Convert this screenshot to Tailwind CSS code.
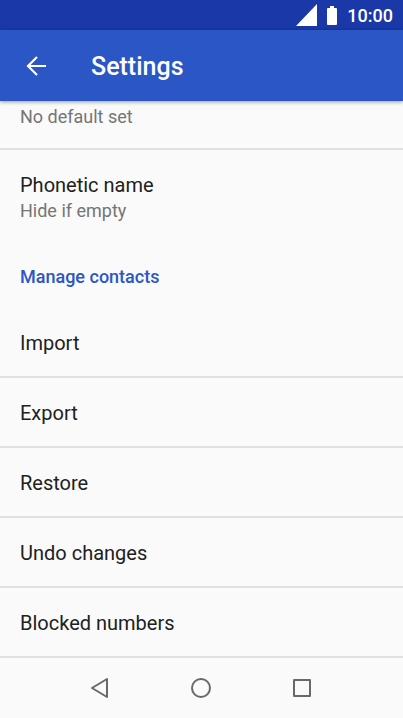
<!DOCTYPE html>
<html lang="en">
<head>
<meta charset="utf-8">
<meta name="viewport" content="width=device-width, initial-scale=1">
<title>Settings</title>
<script src="https://cdn.jsdelivr.net/npm/@tailwindcss/browser@4"></script>
</head>
<body class="flex min-h-screen flex-col bg-[#fafafa] font-[Roboto,sans-serif] text-[#212121]">
  <div class="flex h-[30px] items-center justify-end bg-[#1a38a8] pr-[10px] text-white">
    <svg class="mr-[10px] h-[22px] w-[21px]" viewBox="0 0 21 22" fill="currentColor" aria-hidden="true"><path d="M0 22 21 0V22Z"/></svg>
    <svg class="mr-[10px] h-[19px] w-[10px]" viewBox="0 0 10 19" fill="currentColor" aria-hidden="true"><path d="M3 0H7V2H9Q10 2 10 3V18Q10 19 9 19H1Q0 19 0 18V3Q0 2 1 2H3Z"/></svg>
    <time class="pt-px text-lg leading-7 font-medium">10:00</time>
  </div>
  <header class="z-10 flex h-[71px] items-center bg-[#2a56c6] px-5 text-white shadow-[0_1px_4px_rgba(0,0,0,0.4)]">
    <button type="button" aria-label="Back" class="mr-10 flex h-[30px] w-[31px] items-center justify-center">
      <svg class="h-5 w-5" viewBox="0 0 20 20" fill="none" stroke="currentColor" stroke-width="2.2" aria-hidden="true"><path d="M20 10H2M11 1 2 10 11 19"/></svg>
    </button>
    <h1 class="pt-0.5 text-[25px] leading-[30px] font-medium">Settings</h1>
  </header>
  <main class="flex-1">
    <button type="button" class="block w-full border-b-2 border-[#e0e0e0] px-5 pt-1 pb-[19px] text-left text-lg leading-6 text-[#757575]">No default set</button>
    <button type="button" class="block w-full px-5 pt-[21px] pb-[19px] text-left">
      <span class="block text-xl leading-7">Phonetic name</span>
      <span class="block text-lg leading-6 text-[#757575]">Hide if empty</span>
    </button>
    <h2 class="px-5 pt-[23px] pb-[19px] text-lg leading-6 font-medium text-[#2a56c6]">Manage contacts</h2>
    <ul>
      <li class="border-b-2 border-[#e0e0e0]"><button type="button" class="block w-full px-5 pt-[21px] pb-[19px] text-left text-xl leading-7">Import</button></li>
      <li class="border-b-2 border-[#e0e0e0]"><button type="button" class="block w-full px-5 pt-[21px] pb-[19px] text-left text-xl leading-7">Export</button></li>
      <li class="border-b-2 border-[#e0e0e0]"><button type="button" class="block w-full px-5 pt-[21px] pb-[19px] text-left text-xl leading-7">Restore</button></li>
      <li class="border-b-2 border-[#e0e0e0]"><button type="button" class="block w-full px-5 pt-[21px] pb-[19px] text-left text-xl leading-7">Undo changes</button></li>
      <li class="border-b-2 border-[#e0e0e0]"><button type="button" class="block w-full px-5 pt-[21px] pb-[19px] text-left text-xl leading-7">Blocked numbers</button></li>
    </ul>
  </main>
  <nav aria-label="System" class="flex h-[60px] items-center justify-center gap-[77px] pr-px text-[#696969]">
    <button type="button" aria-label="Back"><svg class="h-6 w-6" viewBox="0 0 24 24" fill="none" stroke="currentColor" stroke-width="2" stroke-linejoin="round" aria-hidden="true"><path d="M19 3V21L4 12Z"/></svg></button>
    <button type="button" aria-label="Home"><svg class="h-6 w-6" viewBox="0 0 24 24" fill="none" stroke="currentColor" stroke-width="2" aria-hidden="true"><circle cx="12" cy="12" r="9"/></svg></button>
    <button type="button" aria-label="Recent apps"><svg class="h-6 w-6" viewBox="0 0 24 24" fill="none" stroke="currentColor" stroke-width="2" stroke-linejoin="round" aria-hidden="true"><path d="M4 4H20V20H4Z"/></svg></button>
  </nav>
</body>
</html>
